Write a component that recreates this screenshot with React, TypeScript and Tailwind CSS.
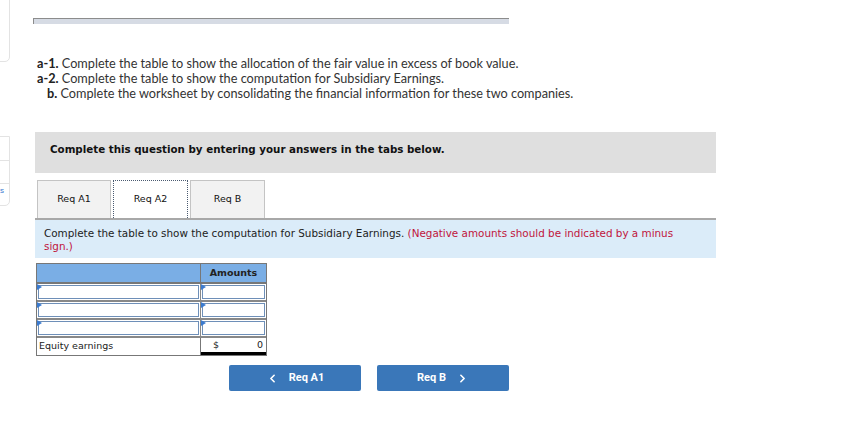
import { ChevronLeft, ChevronRight } from "lucide-react";

const Marker = () => (
  <span className="absolute left-0 top-0 h-0 w-0 border-y-[3px] border-l-[5px] border-y-transparent border-l-[#3b7bd0]" />
);

const InputRow = () => (
  <div className="flex h-[18px] border-b-2 border-[#888]">
    <div className="relative w-[164px] border-r border-[#888] p-[1px]">
      <div className="h-full border border-[#6e8fb8] bg-white" />
      <Marker />
    </div>
    <div className="relative flex-1 p-[1px]">
      <div className="h-full border border-[#6e8fb8] bg-white" />
      <Marker />
    </div>
  </div>
);

export default function App() {
  return (
    <div className="relative h-[439px] w-[863px] overflow-hidden bg-white font-['Liberation_Sans',sans-serif] text-[#222]">
      {/* side panel */}
      <div className="absolute left-[-10px] top-[-10px] h-[72px] w-[20px] rounded-br-[5px] border border-[#e3e3e3]" />
      <div className="absolute left-[-10px] top-[136px] flex h-[70px] w-[20px] flex-col rounded-br-[5px] border border-[#e3e3e3]">
        <div className="h-[24px] border-b border-[#e3e3e3]" />
        <div className="h-[23px] border-b border-[#e3e3e3]" />
        <div className="pl-[9px] pt-[3px] text-[8px] leading-none text-[#3b7bd0]">s</div>
      </div>

      <div className="pl-[33px] pt-[18px]">
        <div className="h-[6px] w-[476px] border-l border-t border-[#8c8c8c] bg-[#d6dbe4]" />

        <div className="pl-[4px] pt-[32px] font-['Lato',sans-serif] text-[12.7px] leading-[15px] text-[#333]">
          <p><b className="text-[#222]">a-1.</b> Complete the table to show the allocation of the fair value in excess of book value.</p>
          <p><b className="text-[#222]">a-2.</b> Complete the table to show the computation for Subsidiary Earnings.</p>
          <p className="pl-[10px]"><b className="text-[#222]">b.</b> Complete the worksheet by consolidating the financial information for these two companies.</p>
        </div>

        <div className="ml-[2px] mt-[31px] w-[681px]">
          <div className="flex h-[41px] items-center bg-[#dfdfdf] pb-[5px] pl-[15px] font-['DejaVu_Sans',sans-serif] text-[10.3px] font-bold text-[#111]">
            Complete this question by entering your answers in the tabs below.
          </div>

          <div className="mt-[7px] flex gap-[2px] pl-[2px] font-['DejaVu_Sans',sans-serif] text-[9.5px] text-[#111]">
            <div className="flex h-[38px] w-[74px] items-center justify-center border border-b-0 border-[#c4c4c4] bg-[#f2f2f2]">Req A1</div>
            <div className="flex h-[38px] w-[75px] items-center justify-center border border-b-0 border-dotted border-[#4a5a70] bg-white">Req A2</div>
            <div className="flex h-[38px] w-[75px] items-center justify-center border border-b-0 border-[#c4c4c4] bg-[#f2f2f2]">Req B</div>
          </div>

          <div className="h-[40px] border-t-2 border-[#a8a8a8] bg-[#dbecf9] pl-[9px] pr-[20px] pt-[7px] font-['DejaVu_Sans',sans-serif] text-[10.4px] leading-[13px] text-[#222]">
            Complete the table to show the computation for Subsidiary Earnings.{" "}
            <span className="text-[#c0143c]">(Negative amounts should be indicated by a minus sign.)</span>
          </div>

          <div className="ml-[1px] mt-[5px] w-[231px] border-x border-t border-[#777] font-['DejaVu_Sans',sans-serif] text-[9.5px] text-[#222]">
            <div className="flex h-[20px] border-b-2 border-[#777] bg-[#7aaee5]">
              <div className="w-[164px] border-r border-[#777]" />
              <div className="flex flex-1 items-center justify-center font-bold">Amounts</div>
            </div>
            <InputRow />
            <InputRow />
            <InputRow />
            <div className="flex h-[18px] border-b border-[#777]">
              <div className="flex w-[164px] items-center border-r border-[#777] pl-[2px]">Equity earnings</div>
              <div className="flex flex-1 items-center justify-between border-b-[3px] border-black px-[3px]">
                <span className="pl-[9px]">$</span>
                <span>0</span>
              </div>
            </div>
          </div>

          <div className="mt-[9px] flex gap-[16px] pl-[194px] font-['Roboto',sans-serif] text-[11px] font-bold text-white">
            <button className="flex h-[26px] w-[132px] items-center justify-center gap-[10px] rounded-[2px] bg-[#3a77b9]">
              <ChevronLeft size={13} strokeWidth={3} />
              Req A1
            </button>
            <button className="flex h-[26px] w-[132px] items-center justify-center gap-[10px] rounded-[2px] bg-[#3a77b9]">
              Req B
              <ChevronRight size={13} strokeWidth={3} />
            </button>
          </div>
        </div>
      </div>
    </div>
  );
}
